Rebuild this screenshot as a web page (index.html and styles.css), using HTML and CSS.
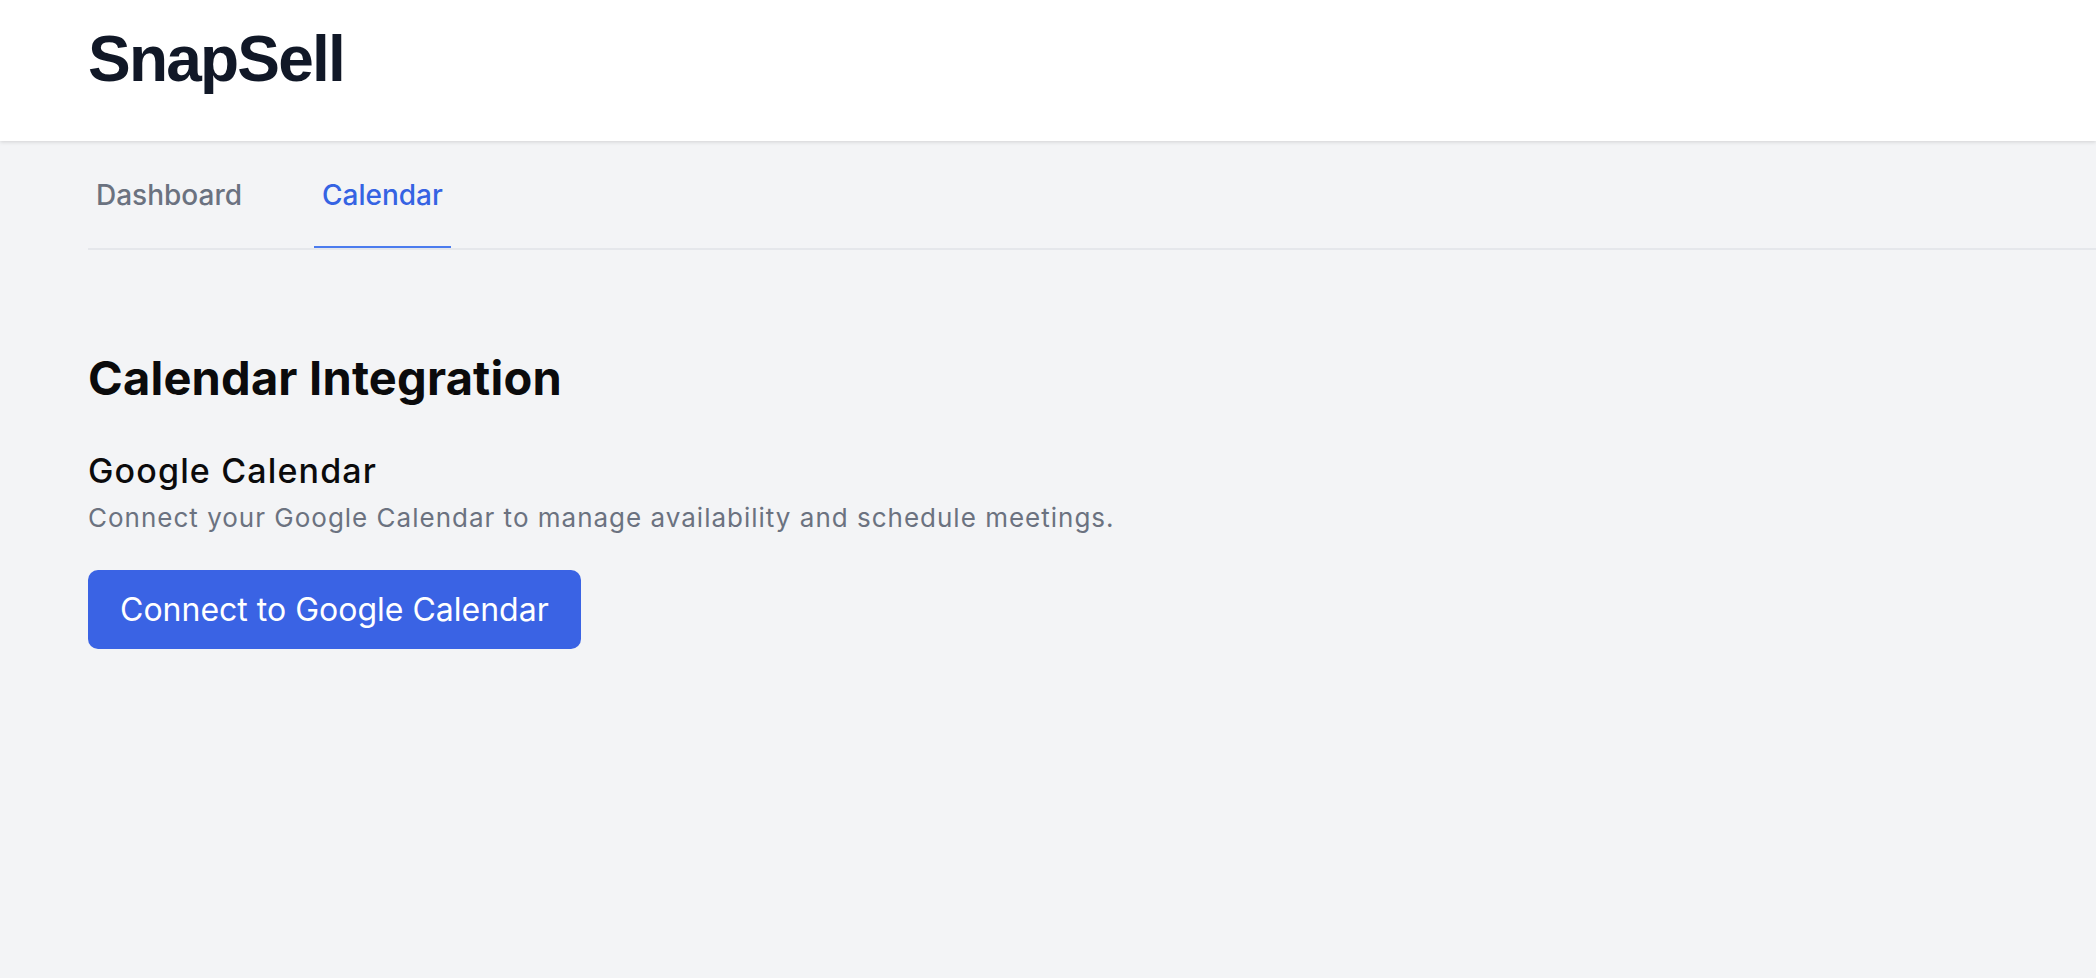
FILE: index.html
```html
<!DOCTYPE html>
<html lang="en">
<head>
<meta charset="utf-8">
<title>SnapSell</title>
<link rel="stylesheet" href="styles.css">
</head>
<body>
<header class="topbar">
  <div class="brand">SnapSell</div>
</header>
<main class="main">
  <nav class="tabs">
    <a class="tab" href="#">Dashboard</a>
    <a class="tab tab-active" href="#">Calendar</a>
  </nav>
  <section class="content">
    <h1 class="title">Calendar Integration</h1>
    <h2 class="subtitle">Google Calendar</h2>
    <p class="desc">Connect your Google Calendar to manage availability and schedule meetings.</p>
    <button class="btn" type="button">Connect to Google Calendar</button>
  </section>
</main>
</body>
</html>
```
FILE: styles.css
```css
* { box-sizing: border-box; }
html, body {
  margin: 0;
  padding: 0;
  background: #f3f4f6;
  font-family: Inter, "Liberation Sans", sans-serif;
}
body { min-height: 978px; }

.topbar {
  height: 141px;
  background: #ffffff;
  padding: 27px 88px 0;
  box-shadow: 0 1px 4px rgba(0, 0, 0, 0.14);
  position: relative;
  z-index: 1;
}
.brand {
  font-family: "Liberation Sans", Arial, sans-serif;
  font-weight: 700;
  font-size: 64px;
  line-height: 64px;
  letter-spacing: -1.8px;
  color: #111827;
}

.main {
  padding-left: 88px;
}

.tabs {
  display: flex;
  gap: 64px;
  border-bottom: 2px solid #e5e7eb;
}
.tab {
  display: block;
  padding: 34px 8px 31px;
  font-size: 28px;
  line-height: 40px;
  font-weight: 500;
  color: #6b7280;
  text-decoration: none;
  border-bottom: 2px solid transparent;
}
.tab-active {
  color: #3563e3;
  border-bottom-color: #4b7bee;
}

.content {
  padding-top: 100px;
}
.title {
  margin: 0;
  font-size: 47px;
  line-height: 56px;
  font-weight: 700;
  letter-spacing: 0.2px;
  color: #0b0b0c;
}
.subtitle {
  margin: 43px 0 0;
  font-size: 34px;
  line-height: 44px;
  font-weight: 500;
  letter-spacing: 1.15px;
  color: #0b0b0c;
}
.desc {
  margin: 7px 0 0;
  font-size: 26px;
  line-height: 36px;
  letter-spacing: 1px;
  color: #6b7280;
}
.btn {
  margin-top: 34px;
  display: block;
  height: 79px;
  padding: 0 32px;
  border: 0;
  border-radius: 10px;
  background: #3a63e4;
  color: #ffffff;
  font-family: Inter, "Liberation Sans", sans-serif;
  font-size: 32px;
  line-height: 48px;
  font-weight: 400;
  cursor: pointer;
}
```
